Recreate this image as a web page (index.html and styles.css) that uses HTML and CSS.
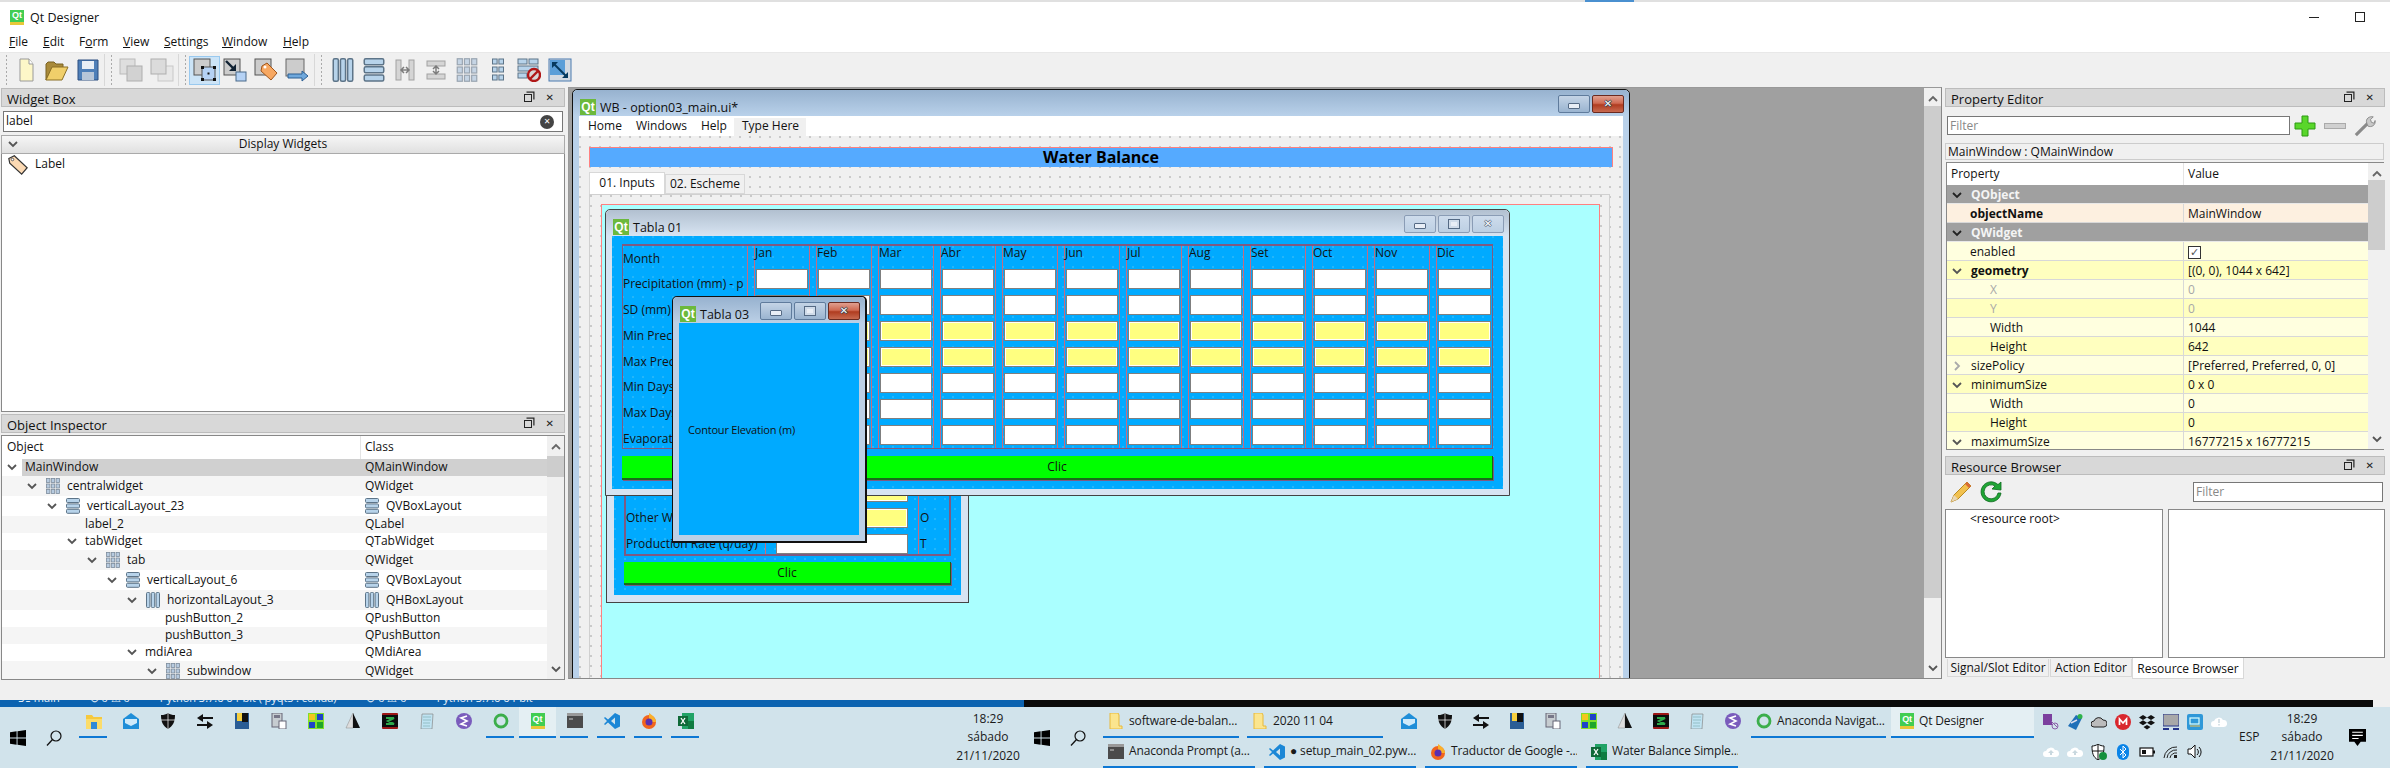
FILE: index.html
```html
<!DOCTYPE html>
<html lang="es">
<head>
<meta charset="utf-8">
<title>Qt Designer</title>
<link rel="stylesheet" href="styles.css">
</head>
<body>
<svg class="defs" width="0" height="0" aria-hidden="true">
  <symbol id="chev" viewBox="0 0 10 7"><path d="M1 1l4 4 4-4" fill="none" stroke="#555" stroke-width="1.8"/></symbol>
  <symbol id="chevr" viewBox="0 0 7 10"><path d="M1 1l4 4-4 4" fill="none" stroke="#aaa" stroke-width="1.8"/></symbol>
  <symbol id="chevu" viewBox="0 0 10 7"><path d="M1 6l4-4 4 4" fill="none" stroke="#666" stroke-width="1.8"/></symbol>
  <symbol id="lh" viewBox="0 0 14 16"><g fill="#b7d3ea" stroke="#5d7488"><rect x=".5" y=".5" width="3.4" height="15" rx="1"/><rect x="5.3" y=".5" width="3.4" height="15" rx="1"/><rect x="10.1" y=".5" width="3.4" height="15" rx="1"/></g></symbol>
  <symbol id="lv" viewBox="0 0 14 16"><g fill="#b7d3ea" stroke="#5d7488"><rect x=".5" y=".5" width="13" height="4" rx="1"/><rect x=".5" y="5.9" width="13" height="4" rx="1"/><rect x=".5" y="11.3" width="13" height="4" rx="1"/></g></symbol>
  <symbol id="lg" viewBox="0 0 14 16"><g fill="#b7cbe0" stroke="#7d8c9c" stroke-width=".8"><rect x=".5" y=".5" width="3.4" height="4"/><rect x="5.3" y=".5" width="3.4" height="4"/><rect x="10.1" y=".5" width="3.4" height="4"/><rect x=".5" y="6" width="3.4" height="4"/><rect x="5.3" y="6" width="3.4" height="4"/><rect x="10.1" y="6" width="3.4" height="4"/><rect x=".5" y="11.5" width="3.4" height="4"/><rect x="5.3" y="11.5" width="3.4" height="4"/><rect x="10.1" y="11.5" width="3.4" height="4"/></g></symbol>
  <symbol id="tag" viewBox="0 0 24 24"><path d="M2 5l6-3 14 13-6 7L3 10z" fill="#fbd9b3" stroke="#333" stroke-width="1.3"/><circle cx="6" cy="6" r="1.4" fill="#fff" stroke="#555"/></symbol>
  <symbol id="t-new" viewBox="0 0 24 24"><path d="M6 1h9l4 5v17H6z" fill="#fdf7c8" stroke="#999"/><path d="M15 1v5h4" fill="#fff" stroke="#999"/></symbol>
  <symbol id="t-open" viewBox="0 0 24 24"><path d="M1 22V6l2-2h6l2 2h7v4H7L1 22z" fill="#a98a3a" stroke="#7a6222"/><path d="M1 22L7 9h16l-6 13z" fill="#f0cf6a" stroke="#8a6f25"/></symbol>
  <symbol id="t-save" viewBox="0 0 24 24"><path d="M2 2h20v20H2z" fill="#4f7fb8" stroke="#2c4f80"/><rect x="6" y="3" width="12" height="8" fill="#e8eef6"/><rect x="6" y="14" width="12" height="8" fill="#b8c6d8"/></symbol>
  <symbol id="t-front" viewBox="0 0 24 24"><rect x="1" y="1" width="15" height="15" fill="#d8d8d8" stroke="#aaa"/><rect x="8" y="8" width="15" height="15" fill="#c8c8c8" stroke="#999"/></symbol>
  <symbol id="t-back" viewBox="0 0 24 24"><rect x="8" y="8" width="15" height="15" fill="#e6e6e6" stroke="#bbb"/><rect x="1" y="1" width="15" height="15" fill="#d4d4d4" stroke="#999"/></symbol>
  <symbol id="t-edit" viewBox="0 0 24 24"><rect x="1" y="1" width="16" height="16" fill="#ccc" stroke="#555"/><rect x="9" y="9" width="13" height="13" fill="#b5d2f5" stroke="#555"/><g fill="#111"><rect x="8" y="8" width="3" height="3"/><rect x="20" y="8" width="3" height="3"/><rect x="8" y="20" width="3" height="3"/><rect x="20" y="20" width="3" height="3"/><rect x="14.5" y="14.5" width="2" height="2"/></g></symbol>
  <symbol id="t-sig" viewBox="0 0 24 24"><rect x="1" y="1" width="16" height="16" fill="#ccc" stroke="#555"/><rect x="13" y="14" width="10" height="9" fill="#b5d2f5" stroke="#4a6a8a"/><path d="M3 3l9 9" stroke="#123" stroke-width="2.4"/><path d="M13 6v7H6z" fill="#123"/></symbol>
  <symbol id="t-bud" viewBox="0 0 24 24"><rect x="1" y="1" width="16" height="16" fill="#ccc" stroke="#555"/><path d="M8 8l5-3 10 10-6 7L7 13z" fill="#f7a862" stroke="#a0561c"/><circle cx="11" cy="9" r="1.5" fill="#fff"/></symbol>
  <symbol id="t-tab" viewBox="0 0 24 24"><rect x="1" y="1" width="18" height="17" fill="#ccc" stroke="#666"/><path d="M3 16h14v-3l6 5-6 5v-3H3z" fill="#6fa8dc" stroke="#2c5e92"/></symbol>
  <symbol id="t-sh" viewBox="0 0 20 24"><rect x="1" y="3" width="18" height="5" fill="#ccc" stroke="#888"/><rect x="1" y="16" width="18" height="5" fill="#ccc" stroke="#888"/><path d="M10 9v6M7 11l3-3 3 3M7 13l3 3 3-3" fill="none" stroke="#555" stroke-width="1.5"/></symbol>
  <symbol id="t-sv" viewBox="0 0 20 24"><rect x="1" y="2" width="5" height="20" fill="#ccc" stroke="#888"/><rect x="14" y="2" width="5" height="20" fill="#ccc" stroke="#888"/><path d="M7 12h6M9 9l-3 3 3 3M11 9l3 3-3 3" fill="none" stroke="#555" stroke-width="1.5"/></symbol>
  <symbol id="t-form" viewBox="0 0 12 24"><g fill="#b7d3ea" stroke="#5d7488"><rect x=".5" y="1" width="4.6" height="5"/><rect x="6.9" y="1" width="4.6" height="5"/><rect x=".5" y="9" width="4.6" height="5"/><rect x="6.9" y="9" width="4.6" height="5"/><rect x=".5" y="17" width="4.6" height="5"/><rect x="6.9" y="17" width="4.6" height="5"/></g></symbol>
  <symbol id="t-break" viewBox="0 0 24 24"><g fill="#b7d3ea" stroke="#5d7488"><rect x="1" y="1" width="9" height="5"/><rect x="12" y="1" width="9" height="5"/><rect x="1" y="8" width="20" height="5"/><rect x="1" y="15" width="9" height="5"/></g><circle cx="17" cy="17" r="6" fill="#d8d8d8" stroke="#b01818" stroke-width="2.4"/><path d="M13 21l8-8" stroke="#b01818" stroke-width="2.4"/></symbol>
  <symbol id="t-adj" viewBox="0 0 24 24"><rect x="1" y="1" width="22" height="22" fill="#d4dbe2" stroke="#4a7ab0"/><rect x="2" y="2" width="15" height="15" fill="#5b9fd8"/><path d="M5 5l14 14" stroke="#063a5e" stroke-width="2"/><path d="M4 10V4h6zM20 14v6h-6z" fill="#063a5e"/></symbol>
  <symbol id="plus" viewBox="0 0 22 22"><path d="M8 1h6v7h7v6h-7v7H8v-7H1V8h7z" fill="#59d62a" stroke="#2c9a12"/></symbol>
  <symbol id="wrench" viewBox="0 0 24 24"><path d="M2 22L16 8" stroke="#8a8a8a" stroke-width="3.4"/><path d="M14 9c-2-5 3-8 7-7l-3 3 1 3 3 1 1-3c1 5-4 8-8 6z" fill="#c8c8c8" stroke="#888"/></symbol>
  <symbol id="pencil" viewBox="0 0 22 22"><path d="M1 21l3-7L17 1l4 4L8 18z" fill="#f2c14e" stroke="#b98a22"/><path d="M17 1l4 4-2 2-4-4z" fill="#d96a36"/><path d="M1 21l3-7 4 4z" fill="#e8d6b4"/></symbol>
  <symbol id="reload" viewBox="0 0 22 22"><path d="M18 12a7 7 0 1 1-3-7l-3 3 9 1V1l-3 2.6A10 10 0 1 0 21 12z" fill="#1fa534" stroke="#0e6a1e" stroke-width=".8"/></symbol>
  <symbol id="win" viewBox="0 0 16 16"><path d="M0 2.2L6.6 1.3V7.6H0zM7.5 1.2L16 0V7.6H7.5zM0 8.4H6.6V14.7L0 13.8zM7.5 8.4H16V16L7.5 14.8z" fill="#000"/></symbol>
  <symbol id="search" viewBox="0 0 16 16"><circle cx="10" cy="6" r="5" fill="none" stroke="#111" stroke-width="1.2"/><path d="M6.5 9.5L1 15.5" stroke="#111" stroke-width="1.3"/></symbol>
  <symbol id="b-folder" viewBox="0 0 16 16"><path d="M0 2h6l1.5 2H16v12H0z" fill="#f6c93e"/><rect y="6" width="16" height="10" fill="#fbdc6a"/><rect x="5" y="9" width="6" height="7" fill="#2f8ad8"/></symbol>
  <symbol id="b-mail" viewBox="0 0 16 16"><path d="M0 6l8-6 8 6v10H0z" fill="#1f8ed8"/><path d="M2 6h12v4l-6 3-6-3z" fill="#cfeafa"/></symbol>
  <symbol id="b-shield" viewBox="0 0 16 16"><path d="M8 0c2 1.500 4 2 7 2 0 7-2 11-7 14C3 13 1 9 1 2c3 0 5-.5 7-2z" fill="#111"/><path d="M1 7h14M8 0v16" stroke="#fff" stroke-width=".7"/></symbol>
  <symbol id="b-arrows" viewBox="0 0 16 16"><path d="M16 4H6V1L0 5l6 4V6h10zM0 11h10V8l6 4-6 4v-3H0z" fill="#111"/></symbol>
  <symbol id="b-disk" viewBox="0 0 16 16"><rect x="1" width="14" height="16" fill="#2a5d95"/><rect x="3" width="8" height="8" fill="#f6cf3e"/><rect x="8" width="6" height="9" fill="#111"/></symbol>
  <symbol id="b-calc" viewBox="0 0 16 16"><rect x="1" width="10" height="14" fill="#c6ccd0" stroke="#667"/><rect x="8" y="8" width="7" height="8" fill="#fff" stroke="#667"/><rect x="3" y="2" width="6" height="3" fill="#778"/></symbol>
  <symbol id="b-blocks" viewBox="0 0 16 16"><rect width="16" height="16" fill="#7fe02a"/><rect x="1" y="1" width="6" height="6" fill="#f4c71d"/><rect x="9" y="1" width="6" height="6" fill="#1e44c8"/><rect x="1" y="9" width="6" height="6" fill="#1e44c8"/><rect x="9" y="9" width="6" height="6" fill="#1fa52a"/></symbol>
  <symbol id="b-tri" viewBox="0 0 16 16"><path d="M8 0L1 15h7z" fill="#ddd" stroke="#888" stroke-width=".5"/><path d="M8 0l7 15H8z" fill="#111"/></symbol>
  <symbol id="b-red" viewBox="0 0 16 16"><rect width="16" height="16" rx="1" fill="#9d1616"/><rect y="2" x="0" width="16" height="12" fill="#0c0c0c"/><path d="M4 5h8L6 8l6 3H4" fill="none" stroke="#2da84a" stroke-width="2"/></symbol>
  <symbol id="b-note" viewBox="0 0 16 16"><path d="M3 1h11l-1 15H2z" fill="#bfe3f2" stroke="#888" stroke-width=".7"/><path d="M4 4h8M4 7h8M4 10h7M4 13h7" stroke="#7aa" stroke-width=".6"/></symbol>
  <symbol id="b-emacs" viewBox="0 0 16 16"><circle cx="8" cy="8" r="8" fill="#7a5cbc"/><path d="M11 3L5 5l6 3-6 3 6 2" fill="none" stroke="#fff" stroke-width="1.6"/></symbol>
  <symbol id="b-ring" viewBox="0 0 16 16"><circle cx="8" cy="8" r="6" fill="none" stroke="#3cae4b" stroke-width="2.8"/></symbol>
  <symbol id="b-cmd" viewBox="0 0 16 16"><rect width="16" height="15" fill="#4b4b4b"/><rect width="16" height="3" fill="#9a9a9a"/><path d="M2 6h4" stroke="#ccc"/></symbol>
  <symbol id="b-vs" viewBox="0 0 16 16"><path d="M11 0l5 2.500v11L11 16 4 9.500 1 12l-1-1 3-3-3-3 1-1 3 2.500z" fill="#1b87d6"/><path d="M11 4.500L7 8l4 3.500z" fill="#d1e3eb"/></symbol>
  <symbol id="b-fx" viewBox="0 0 16 16"><circle cx="8" cy="9" r="7" fill="#f2651d"/><path d="M8 0c3 2 7 5 7 9H8z" fill="#fbb02b"/><circle cx="8" cy="9" r="3.500" fill="#5a2fb0"/></symbol>
  <symbol id="b-xl" viewBox="0 0 16 16"><rect x="4" width="12" height="16" fill="#21a366"/><rect x="10" y="8" width="6" height="8" fill="#107c41"/><rect y="3" width="10" height="10" fill="#0f6a38"/><path d="M3 5l4 6M7 5l-4 6" stroke="#fff" stroke-width="1.300"/></symbol>
  <symbol id="b-file" viewBox="0 0 16 16"><path d="M2 0h8l1 2v11l3 0v3H2z" fill="#fbe58e" stroke="#e8b93a" stroke-width="1"/></symbol>
  <symbol id="s-on" viewBox="0 0 16 16"><rect width="9" height="11" fill="#7b3f9e"/><circle cx="12" cy="12" r="3" fill="none" stroke="#8a5fa8"/><path d="M8 7l7 7" stroke="#8a5fa8"/></symbol>
  <symbol id="s-net" viewBox="0 0 16 16"><path d="M1 12L9 1l6 3-6 12z" fill="#1f6fb8"/><circle cx="13" cy="2.500" r="2.500" fill="#2fb34a"/><path d="M4 9l6-3" stroke="#dde" stroke-width="1.500"/></symbol>
  <symbol id="s-cloud" viewBox="0 0 16 16"><path d="M3 13a3 3 0 0 1 0-6 5 5 0 0 1 9-1 3.500 3.500 0 0 1 1 7z" fill="#bbb" stroke="#222"/></symbol>
  <symbol id="s-mega" viewBox="0 0 16 16"><circle cx="8" cy="8" r="8" fill="#d9272e"/><path d="M4.500 11V5L8 9l3.500-4v6" fill="none" stroke="#fff" stroke-width="1.700"/></symbol>
  <symbol id="s-drop" viewBox="0 0 16 16"><path d="M4 1l4 2.500L4 6 0 3.500zM12 1l4 2.500L12 6 8 3.500zM4 6.200l4 2.500-4 2.500-4-2.500zM12 6.200l4 2.500-4 2.500-4-2.500zM8 11l3.500 2L8 15.500 4.500 13z" fill="#111"/></symbol>
  <symbol id="s-mon" viewBox="0 0 16 16"><rect width="16" height="12" fill="#a8a8a8" stroke="#24348a"/><rect y="14" width="6" height="2" fill="#24348a"/><rect x="10" y="14" width="6" height="2" fill="#24348a"/></symbol>
  <symbol id="s-app" viewBox="0 0 16 16"><rect width="16" height="16" rx="2" fill="#2f98d8"/><rect x="3" y="4" width="9" height="6" fill="none" stroke="#dff" stroke-width="1.200"/><path d="M3 12h10" stroke="#f2c14e"/></symbol>
  <symbol id="s-wc" viewBox="0 0 16 16"><path d="M3 13a3 3 0 0 1 0-6 5 5 0 0 1 9-1 3.500 3.500 0 0 1 1 7z" fill="#fff"/><path d="M8 5v4M8 10v1.500" stroke="#c9d8df" stroke-width="1.400"/></symbol>
  <symbol id="s-up" viewBox="0 0 16 16"><path d="M3 13a3 3 0 0 1 0-6 5 5 0 0 1 9-1 3.500 3.500 0 0 1 1 7z" fill="#fff"/><path d="M8 6l-3 3h2v2h2V9h2z" fill="#c9d8df"/></symbol>
  <symbol id="s-sh" viewBox="0 0 16 16"><path d="M7 0c2 1.500 4 2 6 2 0 7-1 11-6 14C2 13 1 9 1 2c2 0 4-.5 6-2z" fill="#fff" stroke="#111"/><path d="M1 7h12M7 0v16" stroke="#111"/><circle cx="12" cy="12" r="4" fill="#14903c"/></symbol>
  <symbol id="s-bt" viewBox="0 0 16 16"><rect x="2" width="12" height="16" rx="6" fill="#0a84e8"/><path d="M5 5l6 6-3 3V2l3 3-6 6" fill="none" stroke="#fff"/></symbol>
  <symbol id="s-bat" viewBox="0 0 16 16"><rect x="1" y="4" width="13" height="8" fill="#fff" stroke="#111" stroke-width="1.200"/><rect x="3" y="6" width="4" height="4" fill="#111"/><rect x="14" y="6.500" width="2" height="3" fill="#111"/></symbol>
  <symbol id="s-wifi" viewBox="0 0 16 16"><path d="M1 14A12 12 0 0 1 14 3M4 14a9 9 0 0 1 10-8M7 14a6 6 0 0 1 7-5" fill="none" stroke="#222"/><rect x="11" y="11" width="3" height="3" fill="#222"/></symbol>
  <symbol id="s-vol" viewBox="0 0 16 16"><path d="M1 5h3l4-4v13l-4-4H1z" fill="#fff" stroke="#111"/><path d="M10 5a4 4 0 0 1 0 6M12 3a7 7 0 0 1 0 10" fill="none" stroke="#111"/></symbol>
  <symbol id="s-msg" viewBox="0 0 16 16"><path d="M0 0h16v12h-5l-3 4-3-4H0z" fill="#000"/><path d="M3 3h10M3 6h10M3 9h6" stroke="#fff"/></symbol>
</svg>

<header class="titlebar">
  <span class="qt qt-app">Qt</span>
  <span class="app-title">Qt Designer</span>
  <span class="accent"></span>
  <span class="win-ctl"><span class="ctl-min"></span><span class="ctl-max"></span></span>
</header>
<nav class="menubar">
  <span><u>F</u>ile</span><span><u>E</u>dit</span><span>F<u>o</u>rm</span><span><u>V</u>iew</span><span><u>S</u>ettings</span><span><u>W</u>indow</span><span><u>H</u>elp</span>
</nav>
<div class="toolbar">
  <div class="tgroup g1"><svg class="ti"><use href="#t-new"/></svg><svg class="ti"><use href="#t-open"/></svg><svg class="ti"><use href="#t-save"/></svg></div>
  <div class="tgroup g2"><svg class="ti dim"><use href="#t-front"/></svg><svg class="ti dim"><use href="#t-back"/></svg></div>
  <div class="tgroup g3"><span class="tactive"><svg class="ti"><use href="#t-edit"/></svg></span><svg class="ti"><use href="#t-sig"/></svg><svg class="ti"><use href="#t-bud"/></svg><svg class="ti"><use href="#t-tab"/></svg></div>
  <div class="tgroup g4"><svg class="ti"><use href="#lh"/></svg><svg class="ti"><use href="#lv"/></svg><svg class="ti dim"><use href="#t-sv"/></svg><svg class="ti dim"><use href="#t-sh"/></svg><svg class="ti dim"><use href="#lg"/></svg><svg class="ti"><use href="#t-form"/></svg><svg class="ti"><use href="#t-break"/></svg><svg class="ti"><use href="#t-adj"/></svg></div>
</div>

<main class="workspace">
  <aside class="dock-left">
    <section class="widget-box">
      <div class="dock-title"><span>Widget Box</span><span class="dock-btns"><i class="float"></i><i class="x">✕</i></span></div>
      <div class="wb-filter"><span>label</span><span class="clear">✕</span></div>
      <div class="wb-cat"><svg class="chev"><use href="#chev"/></svg><span>Display Widgets</span></div>
      <div class="wb-list"><svg class="tag"><use href="#tag"/></svg><span>Label</span></div>
    </section>
    <section class="inspector">
      <div class="dock-title"><span>Object Inspector</span><span class="dock-btns"><i class="float"></i><i class="x">✕</i></span></div>
      <div class="tree-box">
        <div class="tree">
          <div class="tree-head"><span class="c1">Object</span><span class="c2">Class</span></div>
          <div class="row sel d0"><span class="c1"><svg class="chev"><use href="#chev"/></svg><b>MainWindow</b></span><span class="c2">QMainWindow</span></div>
          <div class="row ic alt d1"><span class="c1"><svg class="chev"><use href="#chev"/></svg><svg class="li"><use href="#lg"/></svg><b>centralwidget</b></span><span class="c2">QWidget</span></div>
          <div class="row ic d2"><span class="c1"><svg class="chev"><use href="#chev"/></svg><svg class="li"><use href="#lv"/></svg><b>verticalLayout_23</b></span><span class="c2"><svg class="li"><use href="#lv"/></svg>QVBoxLayout</span></div>
          <div class="row alt d3"><span class="c1"><i class="nochev"></i><b>label_2</b></span><span class="c2">QLabel</span></div>
          <div class="row d3"><span class="c1"><svg class="chev"><use href="#chev"/></svg><b>tabWidget</b></span><span class="c2">QTabWidget</span></div>
          <div class="row ic alt d4"><span class="c1"><svg class="chev"><use href="#chev"/></svg><svg class="li"><use href="#lg"/></svg><b>tab</b></span><span class="c2">QWidget</span></div>
          <div class="row ic d5"><span class="c1"><svg class="chev"><use href="#chev"/></svg><svg class="li"><use href="#lv"/></svg><b>verticalLayout_6</b></span><span class="c2"><svg class="li"><use href="#lv"/></svg>QVBoxLayout</span></div>
          <div class="row ic alt d6"><span class="c1"><svg class="chev"><use href="#chev"/></svg><svg class="li"><use href="#lh"/></svg><b>horizontalLayout_3</b></span><span class="c2"><svg class="li"><use href="#lh"/></svg>QHBoxLayout</span></div>
          <div class="row d7"><span class="c1"><i class="nochev"></i><b>pushButton_2</b></span><span class="c2">QPushButton</span></div>
          <div class="row alt d7"><span class="c1"><i class="nochev"></i><b>pushButton_3</b></span><span class="c2">QPushButton</span></div>
          <div class="row d6"><span class="c1"><svg class="chev"><use href="#chev"/></svg><b>mdiArea</b></span><span class="c2">QMdiArea</span></div>
          <div class="row ic alt d7"><span class="c1"><svg class="chev"><use href="#chev"/></svg><svg class="li"><use href="#lg"/></svg><b>subwindow</b></span><span class="c2">QWidget</span></div>
        </div>
        <div class="vscroll sb-left"><svg class="up"><use href="#chevu"/></svg><i class="thumb"></i><svg class="down"><use href="#chev"/></svg></div>
      </div>
    </section>
  </aside>

  <section class="mdi">
    <div class="mdi-area">
      <article class="form-win">
        <div class="wtitle">
          <span class="qt">Qt</span><span class="wname">WB - option03_main.ui*</span>
          <span class="wbtns"><i class="wb min"></i><i class="wb cls">✕</i></span>
        </div>
        <div class="fmenu"><span>Home</span><span>Windows</span><span>Help</span><span class="typehere">Type Here</span></div>
        <div class="fbody dots">
          <h1 class="heading">Water Balance</h1>
          <div class="ftabs"><span class="ftab on">01. Inputs</span><span class="ftab">02. Escheme</span></div>
          <div class="fpane">
            <div class="cyan">

              <div class="sub sub2">
                <div class="stitle"></div>
                <div class="sinner dots-b t2">
                  <div class="t2grid">
                    <span class="lb">Industrial Water (q/day)</span><span class="in yl"></span><span class="lb">I</span>
                    <span class="lb">Other Water Uses (q/day)</span><span class="in yl"></span><span class="lb">O</span>
                    <span class="lb">Production Rate (q/day)</span><span class="in"></span><span class="lb">T</span>
                  </div>
                  <div class="clic">Clic</div>
                </div>
              </div>

              <div class="sub sub1">
                <div class="stitle">
                  <span class="qt">Qt</span><span class="wname">Tabla 01</span>
                  <span class="wbtns"><i class="wb off min"></i><i class="wb off max"></i><i class="wb off">✕</i></span>
                </div>
                <div class="sinner dots-b t1">
                  <div class="t1grid">
                    <div class="lbcol"><span>Month</span><span>Precipitation (mm) - p</span><span>SD (mm)</span><span>Min Precipitation (mm)</span><span>Max Precipitation (mm)</span><span>Min Days - rain</span><span>Max Days - rain</span><span>Evaporation (mm)</span></div>
                    <div class="mcol"><span class="hd">Jan</span><i class="in"></i><i class="in"></i><i class="in yl"></i><i class="in yl"></i><i class="in"></i><i class="in"></i><i class="in"></i></div>
                    <div class="mcol"><span class="hd">Feb</span><i class="in"></i><i class="in"></i><i class="in yl"></i><i class="in yl"></i><i class="in"></i><i class="in"></i><i class="in"></i></div>
                    <div class="mcol"><span class="hd">Mar</span><i class="in"></i><i class="in"></i><i class="in yl"></i><i class="in yl"></i><i class="in"></i><i class="in"></i><i class="in"></i></div>
                    <div class="mcol"><span class="hd">Abr</span><i class="in"></i><i class="in"></i><i class="in yl"></i><i class="in yl"></i><i class="in"></i><i class="in"></i><i class="in"></i></div>
                    <div class="mcol"><span class="hd">May</span><i class="in"></i><i class="in"></i><i class="in yl"></i><i class="in yl"></i><i class="in"></i><i class="in"></i><i class="in"></i></div>
                    <div class="mcol"><span class="hd">Jun</span><i class="in"></i><i class="in"></i><i class="in yl"></i><i class="in yl"></i><i class="in"></i><i class="in"></i><i class="in"></i></div>
                    <div class="mcol"><span class="hd">Jul</span><i class="in"></i><i class="in"></i><i class="in yl"></i><i class="in yl"></i><i class="in"></i><i class="in"></i><i class="in"></i></div>
                    <div class="mcol"><span class="hd">Aug</span><i class="in"></i><i class="in"></i><i class="in yl"></i><i class="in yl"></i><i class="in"></i><i class="in"></i><i class="in"></i></div>
                    <div class="mcol"><span class="hd">Set</span><i class="in"></i><i class="in"></i><i class="in yl"></i><i class="in yl"></i><i class="in"></i><i class="in"></i><i class="in"></i></div>
                    <div class="mcol"><span class="hd">Oct</span><i class="in"></i><i class="in"></i><i class="in yl"></i><i class="in yl"></i><i class="in"></i><i class="in"></i><i class="in"></i></div>
                    <div class="mcol"><span class="hd">Nov</span><i class="in"></i><i class="in"></i><i class="in yl"></i><i class="in yl"></i><i class="in"></i><i class="in"></i><i class="in"></i></div>
                    <div class="mcol"><span class="hd">Dic</span><i class="in"></i><i class="in"></i><i class="in yl"></i><i class="in yl"></i><i class="in"></i><i class="in"></i><i class="in"></i></div>
                  </div>
                  <div class="clic">Clic</div>
                </div>
              </div>

              <div class="sub sub3">
                <div class="stitle active">
                  <span class="qt">Qt</span><span class="wname">Tabla 03</span>
                  <span class="wbtns"><i class="wb min"></i><i class="wb max"></i><i class="wb cls">✕</i></span>
                </div>
                <div class="sinner t3"><span>Contour Elevation (m)</span></div>
              </div>

            </div>
          </div>
        </div>
      </article>
    </div>
    <div class="vscroll sb-mid"><svg class="up"><use href="#chevu"/></svg><i class="thumb"></i><svg class="down"><use href="#chev"/></svg></div>
  </section>

  <aside class="dock-right">
    <section class="prop">
      <div class="dock-title"><span>Property Editor</span><span class="dock-btns"><i class="float"></i><i class="x">✕</i></span></div>
      <div class="pfilter"><span class="ph">Filter</span></div>
      <div class="ptools"><svg class="pt"><use href="#plus"/></svg><i class="minus"></i><svg class="pt"><use href="#wrench"/></svg></div>
      <div class="pclass">MainWindow : QMainWindow</div>
      <div class="ptable">
        <div class="pcols">
          <div class="phead"><span class="pa">Property</span><span class="pb">Value</span></div>
          <div class="pr grp"><span class="pa"><svg class="chev"><use href="#chev"/></svg>QObject</span></div>
          <div class="pr on"><span class="pa ind"><strong>objectName</strong></span><span class="pb">MainWindow</span></div>
          <div class="pr grp"><span class="pa"><svg class="chev"><use href="#chev"/></svg>QWidget</span></div>
          <div class="pr y1"><span class="pa ind">enabled</span><span class="pb"><i class="check">✓</i></span></div>
          <div class="pr y2"><span class="pa"><svg class="chev"><use href="#chev"/></svg><strong>geometry</strong></span><span class="pb">[(0, 0), 1044 x 642]</span></div>
          <div class="pr y1 gr"><span class="pa sub-ind">X</span><span class="pb">0</span></div>
          <div class="pr y2 gr"><span class="pa sub-ind">Y</span><span class="pb">0</span></div>
          <div class="pr y1"><span class="pa sub-ind">Width</span><span class="pb">1044</span></div>
          <div class="pr y2"><span class="pa sub-ind">Height</span><span class="pb">642</span></div>
          <div class="pr y1"><span class="pa"><svg class="chev chevr"><use href="#chevr"/></svg>sizePolicy</span><span class="pb">[Preferred, Preferred, 0, 0]</span></div>
          <div class="pr y2"><span class="pa"><svg class="chev"><use href="#chev"/></svg>minimumSize</span><span class="pb">0 x 0</span></div>
          <div class="pr y1"><span class="pa sub-ind">Width</span><span class="pb">0</span></div>
          <div class="pr y2"><span class="pa sub-ind">Height</span><span class="pb">0</span></div>
          <div class="pr y1"><span class="pa"><svg class="chev"><use href="#chev"/></svg>maximumSize</span><span class="pb">16777215 x 16777215</span></div>
        </div>
        <div class="vscroll sb-prop"><svg class="up"><use href="#chevu"/></svg><i class="thumb"></i><svg class="down"><use href="#chev"/></svg></div>
      </div>
    </section>
    <section class="res">
      <div class="dock-title"><span>Resource Browser</span><span class="dock-btns"><i class="float"></i><i class="x">✕</i></span></div>
      <div class="rtools"><svg class="rt"><use href="#pencil"/></svg><svg class="rt"><use href="#reload"/></svg><div class="rfilter"><span class="ph">Filter</span></div></div>
      <div class="rpanes"><div class="rpane"><span class="rroot">&lt;resource root&gt;</span></div><div class="rpane"></div></div>
      <div class="rtabs"><span class="rtab t-a">Signal/Slot Editor</span><span class="rtab t-b">Action Editor</span><span class="rtab t-c">Resource Browser</span></div>
    </section>
  </aside>
</main>

<div class="strip"><div class="strip-blue"><span>⎇ main</span><span>⊙ 0 ⚠ 0</span><span>Python 3.7.6 64-bit ('pyqt5': conda)</span><span>⊙ 0 ⚠ 0</span><span>Python 3.7.6 64-bit</span></div><div class="strip-black"></div></div>

<footer class="taskbar">
  <div class="tb-start s1"><svg class="st"><use href="#win"/></svg><svg class="st"><use href="#search"/></svg></div>
  <div class="tb-icons">
    <span class="ib u"><svg><use href="#b-folder"/></svg></span><span class="ib"><svg><use href="#b-mail"/></svg></span><span class="ib"><svg><use href="#b-shield"/></svg></span><span class="ib"><svg><use href="#b-arrows"/></svg></span><span class="ib"><svg><use href="#b-disk"/></svg></span><span class="ib"><svg><use href="#b-calc"/></svg></span><span class="ib"><svg><use href="#b-blocks"/></svg></span><span class="ib"><svg><use href="#b-tri"/></svg></span><span class="ib"><svg><use href="#b-red"/></svg></span><span class="ib"><svg><use href="#b-note"/></svg></span><span class="ib"><svg><use href="#b-emacs"/></svg></span><span class="ib u"><svg><use href="#b-ring"/></svg></span><span class="ib u act"><span class="qt qt-tb">Qt</span></span><span class="ib u"><svg><use href="#b-cmd"/></svg></span><span class="ib u"><svg><use href="#b-vs"/></svg></span><span class="ib u"><svg><use href="#b-fx"/></svg></span><span class="ib u"><svg><use href="#b-xl"/></svg></span>
  </div>
  <div class="clock ck1"><span>18:29</span><span>sábado</span><span>21/11/2020</span></div>
  <div class="tb-start s2"><svg class="st"><use href="#win"/></svg><svg class="st"><use href="#search"/></svg></div>
  <div class="tb-rows">
    <div class="tb-row r1">
      <span class="tbtn w136"><svg><use href="#b-file"/></svg>software-de-balan...</span>
      <span class="tbtn w136"><svg><use href="#b-file"/></svg>2020 11 04</span>
      <span class="ib2"><svg><use href="#b-mail"/></svg></span><span class="ib2"><svg><use href="#b-shield"/></svg></span><span class="ib2"><svg><use href="#b-arrows"/></svg></span><span class="ib2"><svg><use href="#b-disk"/></svg></span><span class="ib2"><svg><use href="#b-calc"/></svg></span><span class="ib2"><svg><use href="#b-blocks"/></svg></span><span class="ib2"><svg><use href="#b-tri"/></svg></span><span class="ib2"><svg><use href="#b-red"/></svg></span><span class="ib2"><svg><use href="#b-note"/></svg></span><span class="ib2"><svg><use href="#b-emacs"/></svg></span>
      <span class="tbtn w136 ana"><svg><use href="#b-ring"/></svg>Anaconda Navigat...</span>
      <span class="tbtn qtd"><span class="qt qt-tb">Qt</span>Qt Designer</span>
    </div>
    <div class="tb-row r2">
      <span class="tbtn w152"><svg><use href="#b-cmd"/></svg>Anaconda Prompt (a...</span>
      <span class="tbtn w152"><svg><use href="#b-vs"/></svg>● setup_main_02.pyw...</span>
      <span class="tbtn w152"><svg><use href="#b-fx"/></svg>Traductor de Google -...</span>
      <span class="tbtn w152"><svg><use href="#b-xl"/></svg>Water Balance Simple...</span>
    </div>
  </div>
  <div class="tray">
    <svg><use href="#s-on"/></svg><svg><use href="#s-net"/></svg><svg><use href="#s-cloud"/></svg><svg><use href="#s-mega"/></svg><svg><use href="#s-drop"/></svg><svg><use href="#s-mon"/></svg><svg><use href="#s-app"/></svg><svg><use href="#s-wc"/></svg>
    <svg><use href="#s-up"/></svg><svg><use href="#s-up"/></svg><svg><use href="#s-sh"/></svg><svg><use href="#s-bt"/></svg><svg><use href="#s-bat"/></svg><svg><use href="#s-wifi"/></svg><svg><use href="#s-vol"/></svg>
  </div>
  <span class="esp">ESP</span>
  <div class="clock ck2"><span>18:29</span><span>sábado</span><span>21/11/2020</span></div>
  <svg class="notif"><use href="#s-msg"/></svg>
</footer>
</body>
</html>
```

FILE: styles.css
```css
* { box-sizing: border-box; }
html, body { margin: 0; padding: 0; }
body {
  width: 2390px; height: 768px; overflow: hidden;
  background: #f0f0f0; color: #111;
  font: 12px/1.2 "Open Sans", "Noto Sans", sans-serif;
  display: flex; flex-direction: column;
}
.defs { position: absolute; }
i { font-style: normal; }
b { font-weight: 400; }

.qt {
  display: inline-flex; align-items: center; justify-content: center;
  width: 16px; height: 16px; background: #6cb93c; color: #fff;
  font: 700 12px/1 "Liberation Sans", sans-serif; flex: none;
}
.qt-app { width: 14px; height: 15px; font-size: 9px; background: #41cd52; border-bottom: 3px solid #e8c838; }
.qt-tb { width: 14px; height: 16px; font-size: 9px; background: #41cd52; border-bottom: 3px solid #e8c838; }

/* top */
.titlebar { height: 30px; background: #fff; border-top: 2px solid #e0e0e0; display: flex; align-items: center; padding: 2px 0 0 10px; position: relative; flex: none; }
.app-title { margin-left: 6px; font-size: 12.500px; }
.accent { position: absolute; left: 1585px; top: -2px; width: 49px; height: 2px; background: #4a90d0; }
.win-ctl { margin-left: auto; display: flex; gap: 36px; align-items: center; margin-right: 25px; }
.ctl-min { width: 10px; height: 1px; background: #222; }
.ctl-max { width: 10px; height: 10px; border: 1px solid #222; }
.menubar { height: 23px; background: #fff; display: flex; align-items: center; flex: none; padding: 2px 0 0 9px; border-bottom: 1px solid #e8e8e8; }
.menubar span:nth-child(1) { width: 34px; }
.menubar span:nth-child(2) { width: 36px; }
.menubar span:nth-child(3) { width: 44px; }
.menubar span:nth-child(4) { width: 41px; }
.menubar span:nth-child(5) { width: 58px; }
.menubar span:nth-child(6) { width: 61px; }
.toolbar { height: 34px; display: flex; flex: none; align-items: center; }
.tgroup { display: flex; align-items: center; height: 32px; border-right: 1px solid #d8d8d8; background-image: radial-gradient(#aaa 0.7px, transparent 1px); background-size: 3px 4px; background-repeat: repeat-y; background-position: 5px 0; }
.ti { width: 24px; height: 24px; flex: none; }
.dim { opacity: .75; }
.g1 { width: 105px; padding-left: 14px; gap: 7px; }
.g2 { width: 74px; padding-left: 14px; gap: 7px; }
.g3 { width: 136px; padding-left: 10px; gap: 7px; }
.g4 { padding-left: 16px; gap: 7px; border-right: 0; }
.tactive { width: 31px; height: 29px; background: #cce4f7; border: 1px solid #99c9ef; display: flex; align-items: center; justify-content: center; margin-right: -4px; }

/* workspace */
.workspace { height: 613px; display: flex; flex: none; }
.dock-left { width: 565px; flex: none; padding: 1px 0 0 1px; display: flex; flex-direction: column; }
.dock-title { height: 19px; background: #d8d8d8; border: 1px solid #bcbcbc; display: flex; align-items: center; justify-content: space-between; padding: 3px 10px 0 5px; font-size: 13px; line-height: 15px; flex: none; }
.dock-btns { display: flex; gap: 14px; align-items: center; margin-top: -3px; }
.float { width: 8px; height: 8px; border: 1px solid #222; box-shadow: 1.500px -1.500px 0 -0.2px #d8d8d8, 2.500px -2.500px 0 0 #222; }
.x { font: 700 10px/1 "DejaVu Sans", sans-serif; color: #222; }
.widget-box { height: 320px; display: flex; flex-direction: column; }
.wb-filter { margin: 4px 2px 3px 2px; height: 21px; background: #fff; border: 1px solid #777; display: flex; align-items: center; justify-content: space-between; padding: 0 8px 0 2px; flex: none; }
.clear { width: 14px; height: 14px; border-radius: 50%; background: #444; color: #fff; font: 700 8px/14px "DejaVu Sans", sans-serif; text-align: center; }
.wb-cat { height: 19px; flex: none; border: 1px solid #aaa; background: linear-gradient(#f6f6f6, #e0e0e0); display: flex; align-items: center; justify-content: center; position: relative; }
.wb-cat .chev { position: absolute; left: 6px; top: 5px; }
.wb-list { flex: 1; background: #fff; border: 1px solid #888; border-top: 0; display: flex; align-items: center; align-self: stretch; height: 258px; padding: 0 0 236px 5px; gap: 6px; }
.tag { width: 22px; height: 22px; }
.chev { width: 10px; height: 7px; flex: none; }
.inspector { margin-top: 6px; display: flex; flex-direction: column; }
.tree-box { margin-top: 2px; height: 245px; border: 1px solid #888; background: #fff; display: flex; }
.tree { width: 545px; flex: none; overflow: hidden; }
.tree-head { height: 23px; display: flex; align-items: center; }
.tree-head .c1 { padding-left: 5px; border-right: 1px solid #e4e4e4; height: 100%; display: flex; align-items: center; }
.c1 { width: 359px; flex: none; display: flex; align-items: center; }
.c2 { padding-left: 4px; display: flex; align-items: center; }
.row { height: 17px; display: flex; align-items: center; }
.row.ic { height: 20px; }
.alt { background: #f5f5f5; }
.sel { background: linear-gradient(90deg, #fff 20px, #d0d0d0 20px); }
.row .chev { margin: 0 8px 0 1px; }
.nochev { width: 19px; flex: none; }
.li { width: 14px; height: 16px; flex: none; margin-right: 7px; }
.row .chev + .li { margin-left: 1px; }
.d0 .c1 { padding-left: 4px; }
.d1 .c1 { padding-left: 24px; }
.d2 .c1 { padding-left: 44px; }
.d3 .c1 { padding-left: 64px; }
.d4 .c1 { padding-left: 84px; }
.d5 .c1 { padding-left: 104px; }
.d6 .c1 { padding-left: 124px; }
.d7 .c1 { padding-left: 144px; }
.vscroll { background: #f0f0f0; display: flex; flex-direction: column; align-items: center; position: relative; flex: none; width: 17px; }
.vscroll .up, .vscroll .down { width: 10px; height: 7px; position: absolute; left: 4px; }
.vscroll .up { top: 7px; }
.vscroll .down { bottom: 6px; }
.thumb { position: absolute; left: 0; right: 0; background: #cdcdcd; }
.sb-left .thumb { top: 20px; height: 21px; }
.sb-mid .thumb { top: 18px; height: 492px; }
.sb-prop .thumb { top: 17px; height: 70px; }

/* central */
.mdi { width: 1374px; flex: none; margin-left: 3px; height: 592px; border-top: 1px solid #999; border-left: 1px solid #999; border-right: 1px solid #888; border-bottom: 1px solid #888; display: flex; }
.mdi-area { flex: 1; background: #a0a0a0; position: relative; overflow: hidden; }
.form-win { position: absolute; left: 3px; top: 1px; width: 1058px; height: 600px; background: #b9d1ea; border: 1px solid #111; border-radius: 5px 5px 0 0; padding: 0 6px; display: flex; flex-direction: column; }
.wtitle { height: 26px; margin: 0 -6px; padding: 9px 6px 0 7px; background: linear-gradient(#97b2cf, #b9d1ea); display: flex; align-items: flex-start; border-radius: 5px 5px 0 0; position: relative; flex: none; }
.wname { margin-left: 4px; font-size: 12.500px; line-height: 17px; }
.wbtns { position: absolute; right: 5px; top: 5px; display: flex; gap: 2px; }
.wb { width: 32px; height: 18px; border: 1px solid #5f7b9c; border-radius: 2px; background: linear-gradient(#c4d4e6, #9ab4d0); font: 700 10px/16px "DejaVu Sans", sans-serif; text-align: center; color: #fff; text-shadow: 1px 0 0 #3c4a5c, -1px 0 0 #3c4a5c, 0 1px 0 #3c4a5c, 0 -1px 0 #3c4a5c; display: flex; align-items: center; justify-content: center; }
.wb.cls { background: linear-gradient(#e0a090 0, #d06a52 45%, #b03c20 55%, #c86a50); border-color: #6a2a20; }
.wb.off { background: linear-gradient(#cedcec, #bccfe3); border-color: #8a9cb5; text-shadow: 1px 0 0 #66768a, -1px 0 0 #66768a, 0 1px 0 #66768a, 0 -1px 0 #66768a; }
.wb.min::before { content: ""; width: 10px; height: 4px; margin-top: 4px; background: #e8eef6; border: 1px solid #556a84; border-radius: 1px; }
.wb.max::before { content: ""; width: 10px; height: 8px; background: #e8eef6; border: 1px solid #556a84; box-shadow: inset 0 0 0 2px #d0dcea; }
.fmenu { height: 20px; background: #fff; display: flex; align-items: center; padding: 1px 0 0 9px; flex: none; }
.fmenu span:nth-child(1) { width: 48px; }
.fmenu span:nth-child(2) { width: 65px; }
.fmenu span:nth-child(3) { width: 33px; }
.typehere { height: 18px; padding: 0 7px 0 8px; background: #f0f0f0; display: flex; align-items: center; }
.dots { background-color: #f0f0f0; background-image: radial-gradient(circle at 1px 1px, #b4b4b4 .6px, transparent .9px); background-size: 10px 10px; }
.dots-b { background-image: radial-gradient(circle at 1px 1px, #38bcf6 .6px, transparent .9px); background-size: 10px 10px; }
.fbody { flex: 1; padding: 11px 10px 0; display: flex; flex-direction: column; min-height: 0; }
.heading { height: 20px; margin: 0; background: #55aaff; border: 1px solid #ff8080; border-bottom: 0; font: 700 16px/19px "Open Sans", sans-serif; text-align: center; color: #000; flex: none; }
.ftabs { display: flex; margin-top: 6px; height: 21px; align-items: flex-end; flex: none; position: relative; z-index: 1; }
.ftab { height: 20px; width: 80px; border: 1px solid #d8d8d8; background: #f0f0f0; text-align: center; line-height: 18px; }
.ftab.on { height: 22px; width: 76px; background: #fff; border-bottom: 0; line-height: 20px; }
.fpane { height: 486px; margin-top: 0; border: 1px solid #d0d0d0; border-bottom: 0; margin-right: 3px; padding: 9px 9px 0 11px; background: inherit; background-image: inherit; background-size: inherit; }
.cyan { height: 476px; background: #aaffff; border: 1px solid #ff8080; position: relative; overflow: hidden; }
.sub { position: absolute; display: flex; flex-direction: column; padding: 0 6px 6px; background: #d7e4f2; border: 1px solid #444; }
.sub1 { left: 3px; top: 4px; width: 905px; height: 287px; border-radius: 5px 5px 0 0; }
.sub2 { left: 4px; top: 196px; width: 363px; height: 202px; padding: 0 7px 7px; }
.sub3 { left: 70px; top: 91px; width: 195px; height: 247px; background: #bcd0e6; border: 1px solid #111; border-right-width: 2px; border-bottom-width: 2px; border-radius: 5px 5px 0 0; }
.stitle { height: 26px; margin: 0 -6px; padding: 9px 6px 0 7px; background: linear-gradient(#b2c0d0, #d7e4f2); display: flex; align-items: flex-start; position: relative; flex: none; border-radius: 5px 5px 0 0; }
.stitle.active { background: linear-gradient(#97b2cf, #bcd0e6); }
.sinner { flex: 1; background-color: #00aaff; display: flex; flex-direction: column; }
.t1 { padding: 9px 10px 0; }
.t2 { padding: 0 10px 10px; justify-content: flex-end; }
.t3 { padding: 100px 0 0 9px; color: #111; font-size: 11px; letter-spacing: -.2px; }
.in { display: block; background: #fff; border: 1px solid #7f7f7f; height: 20px; }
.yl { background: #ffff80; box-shadow: inset 0 0 0 1px #fff; }
.t1grid { height: 204px; border: 1px solid #7f5a82; border-top-width: 1px; display: grid; grid-template-columns: 125px repeat(12, 56px); column-gap: 6px; flex: none; box-shadow: 0 -1px 0 #7f5a82; }
.lbcol { display: grid; grid-auto-rows: 25.750px; align-items: center; border-right: 1px solid #c86a80; white-space: nowrap; overflow: hidden; }
.mcol { border-left: 1px solid #c86a80; border-right: 1px solid #c86a80; display: flex; flex-direction: column; gap: 6px; }
.mcol:last-child { border-right: 0; }
.mcol .in { margin: 0 1px; }
.hd { height: 17px; margin-top: 0; color: #111; }
.clic { height: 24px; margin-top: 7px; background: #00ff00; border-right: 1px solid #1a5e1a; border-bottom: 2px solid #1a6a1a; box-shadow: 1px 1px 0 #7f5a82; text-align: center; line-height: 22px; color: #111; flex: none; }
.t2grid { display: grid; grid-template-columns: 140px 132px 35px; column-gap: 10px; grid-auto-rows: 26px; align-items: end; border: 2px solid #7f5a82; border-width: 0 2px 2px; white-space: nowrap; flex: none; }
.t2grid .lb { align-self: stretch; padding-top: 8px; line-height: 16px; }
.t2grid .lb:nth-child(3n+1) { border-right: 1px solid #c86a80; overflow: hidden; }
.t2grid .lb:nth-child(3n) { border-left: 1px solid #c86a80; padding-left: 1px; }
.t2grid .in { height: 20px; }
.t2 .clic { margin-top: 6px; height: 23px; }

/* right dock */
.dock-right { margin-left: 3px; width: 440px; flex: none; padding-top: 1px; display: flex; flex-direction: column; }
.prop { position: relative; height: 362px; }
.pfilter { margin: 9px 0 0 2px; width: 343px; height: 19px; background: #fff; border: 1px solid #777; padding: 0 2px; line-height: 17px; }
.ph { color: #888; }
.ptools { position: absolute; top: 27px; left: 349px; display: flex; align-items: center; gap: 8px; }
.pt { width: 22px; height: 22px; }
.minus { width: 22px; height: 6px; background: #d0d0d0; border: 1px solid #aaa; }
.pclass { margin: 8px 1px 0 0; height: 17px; border: 1px solid #ccc; padding-left: 2px; line-height: 15px; }
.ptable { margin: 2px 1px 0 1px; height: 288px; border: 1px solid #888; background: #fff; display: flex; }
.pcols { width: 421px; flex: none; overflow: hidden; }
.phead { height: 22px; display: flex; align-items: center; }
.pa { width: 237px; flex: none; padding-left: 4px; display: flex; align-items: center; height: 100%; border-right: 1px solid #e4e4e4; }
.pb { padding-left: 4px; display: flex; align-items: center; height: 100%; }
.pr { height: 19px; display: flex; align-items: center; border-bottom: 1px solid #d8d8d8; }
.pr .pa, .pr .pb { padding-top: 2px; }
.pr .pa { border-right-color: #d8d8d8; }
.pr .chev { margin: 0 9px 0 1px; }
.pr .chevr { width: 7px; height: 10px; margin-left: 3px; margin-right: 10px; }
.grp { background: #a0a0a0; color: #f4f4f4; font-weight: 700; border-bottom: 1px solid #e8e8e8; height: 19px; }
.grp .pa { border-right: 0; }
.grp .chev { filter: brightness(.4); }
.on { background: #fdf0e0; }
.y1 { background: #ffffdf; }
.y2 { background: #ffffbf; }
.gr { color: #a8a8a8; }
.ind { padding-left: 23px; }
.sub-ind { padding-left: 43px; }
strong { font-weight: 700; }
.check { width: 13px; height: 13px; border: 1px solid #333; background: #fff; display: block; font: 11px/11px "DejaVu Sans", sans-serif; text-align: center; color: #555; }
.res { margin-top: 6px; display: flex; flex-direction: column; }
.rtools { height: 34px; display: flex; align-items: center; padding-left: 5px; gap: 8px; flex: none; }
.rt { width: 22px; height: 22px; }
.rfilter { margin-left: auto; margin-right: 2px; width: 190px; height: 20px; background: #fff; border: 1px solid #777; padding: 0 2px; line-height: 18px; }
.rpanes { display: flex; gap: 5px; height: 149px; flex: none; }
.rpane { flex: 1; background: #fff; border: 1px solid #888; }
.rpane:first-child { flex: 0 0 218px; }
.rroot { display: block; margin: 2px 0 0 24px; }
.rtabs { display: flex; padding-left: 2px; align-items: flex-start; }
.rtab { height: 18px; border: 1px solid #d8d8d8; border-top: 0; text-align: center; line-height: 18px; margin-top: 1px; }
.t-a { width: 102px; }
.t-b { width: 82px; margin-left: 1px; }
.t-c { width: 112px; height: 21px; background: #fff; margin-top: 0; line-height: 21px; }

/* taskbar */
.strip { height: 7px; display: flex; flex: none; }
.strip-blue { width: 1024px; background: #0c63b0; color: #e8f0f8; overflow: hidden; display: flex; gap: 30px; padding-left: 18px; font-size: 11px; line-height: 14px; }
.strip-blue span { margin-top: -9px; white-space: nowrap; height: 16px; }
.strip-black { width: 1349px; background: #0a0a0a; }
.taskbar { height: 61px; background: #d1e3eb; display: flex; flex: none; align-items: stretch; color: #1a1a1a; }
.tb-start { display: flex; align-items: center; flex: none; }
.st { width: 16px; height: 16px; flex: none; }
.s1 { width: 75px; padding: 0 0 0 10px; gap: 20px; }
.s2 { width: 70px; padding: 0 0 0 1px; gap: 20px; }
.tb-icons { width: 868px; flex: none; display: flex; height: 31px; }
.ib { width: 37px; height: 31px; flex: none; display: flex; align-items: center; justify-content: center; padding-bottom: 3px; position: relative; }
.ib svg, .ib2 svg { width: 16px; height: 16px; }
.ib.u::after { content: ""; position: absolute; left: 4px; right: 5px; bottom: 0; height: 2px; background: #0d78d4; }
.ib.act { background: #e4eff3; }
.ib.act::after { left: 0; right: 0; }
.clock { width: 90px; flex: none; display: flex; flex-direction: column; align-items: center; justify-content: space-around; padding: 3px 0; font-size: 12px; }
.tb-rows { width: 940px; flex: none; display: flex; flex-direction: column; }
.tb-row { display: flex; height: 31px; flex: none; }
.r1 { gap: 0; }
.r2 { gap: 9px; height: 30px; }
.tbtn { position: relative; display: flex; align-items: center; gap: 5px; padding: 0 0 3px 5px; white-space: nowrap; overflow: hidden; flex: none; letter-spacing: -.15px; }
.tbtn svg { width: 16px; height: 16px; flex: none; }
.tbtn::after { content: ""; position: absolute; left: 0; right: 0; bottom: 0; height: 2px; background: #0d78d4; }
.w136 { width: 136px; margin-right: 8px; }
.r1 .w136.ana { margin: 0 5px 0 0; width: 135px; }
.w152 { width: 152px; }
.qtd { width: 143px; background: #e4eff3; padding-left: 9px; }
.ib2 { width: 36px; flex: none; display: flex; align-items: center; justify-content: center; height: 31px; padding-bottom: 3px; }
.tray { width: 192px; flex: none; display: grid; grid-template-columns: repeat(8, 24px); grid-auto-rows: 30px; align-items: center; }
.tray svg { width: 16px; height: 16px; }
.esp { width: 22px; flex: none; align-self: center; padding-left: 4px; white-space: nowrap; }
.ck2 { width: 90px; }
.notif { width: 17px; height: 17px; margin: 22px 0 0 2px; flex: none; }
```
